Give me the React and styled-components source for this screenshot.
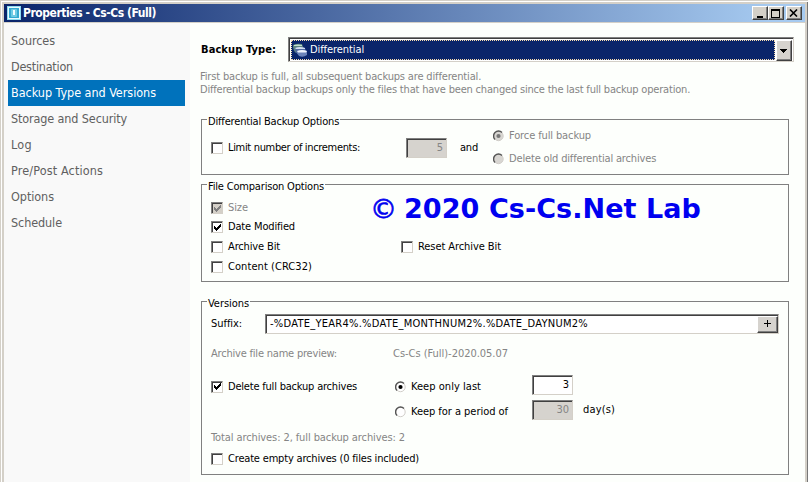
import React, { useLayoutEffect, useRef, useState } from "react";
import styled, { createGlobalStyle, css } from "styled-components";

const GlobalStyle = createGlobalStyle`
  * { box-sizing: border-box; }
  body {
    margin: 0;
    overflow: hidden;
    background: #d4d0c8;
    font-family: Tahoma, "DejaVu Sans Condensed", "DejaVu Sans", sans-serif;
    font-stretch: condensed;
    font-size: 11px;
    line-height: 14px;
    color: #000;
  }
`;

const Label = styled.span`
  display: inline-block;
  flex: none;
  justify-self: start;
  align-self: ${(p) => (p.$stacked ? "flex-start" : "auto")};
  white-space: pre;
  color: ${(p) => (p.$muted ? "#858585" : "inherit")};
  font-weight: ${(p) => (p.$bold ? 700 : 400)};
`;

/* Label tracked so that it fills the given width. */
function Text({ w, children, ...rest }) {
  const ref = useRef(null);
  const [spacing, setSpacing] = useState(0);
  useLayoutEffect(() => {
    ref.current.style.letterSpacing = "0px";
    const natural = ref.current.getBoundingClientRect().width;
    const next = (w - natural) / children.length;
    ref.current.style.letterSpacing = `${next}px`;
    setSpacing(next);
  }, [w, children]);
  return (
    <Label ref={ref} style={{ letterSpacing: `${spacing}px` }} {...rest}>
      {children}
    </Label>
  );
}

const Window = styled.div`
  width: 808px;
  height: 482px;
  display: flex;
  flex-direction: column;
  padding: 4px 3px 0 4px;
  background: #d4d0c8;
  box-shadow: inset 1px 1px #d4d0c8, inset 2px 2px #fff, inset -1px 0 #777;
`;

const TitleBar = styled.header`
  height: 18px;
  flex: none;
  display: flex;
  align-items: center;
  padding: 0 3px;
  color: #fff;
  font-size: 12px;
  background: linear-gradient(90deg, #0a246a, #a6caf0 96%);
`;

const TitleText = styled.div`
  flex: 1;
  padding-left: 2px;
`;

const WindowButton = styled.button`
  width: 16px;
  height: 14px;
  padding: 0;
  margin-left: ${(p) => (p.$apart ? "2px" : "0")};
  display: grid;
  place-items: center;
  border: 1px solid;
  border-color: #fff #404040 #404040 #fff;
  box-shadow: inset -1px -1px #808080;
  background: #d4d0c8;
`;

const Client = styled.div`
  flex: 1;
  display: flex;
  margin-top: 1px;
  background: #fdfffc;
`;

const Sidebar = styled.nav`
  width: 186px;
  padding: 5px 5px 0 4px;
  background: #f9f9f9;
`;

const NavItem = styled.div`
  height: 26px;
  padding-left: 3px;
  display: flex;
  align-items: center;
  font-size: 12.5px;
  color: ${(p) => (p.$active ? "#fff" : "#606060")};
  background: ${(p) => (p.$active ? "#0072bc" : "transparent")};
`;

const Main = styled.main`
  flex: 1;
  padding: 14px 0 0 11px;
`;

const TypeRow = styled.div`
  display: flex;
  align-items: center;
  height: 25px;
`;

const sunken = css`
  border: 1px solid;
  border-color: #808080 #d4d0c8 #d4d0c8 #808080;
  box-shadow: inset 1px 1px #404040;
`;

const Combo = styled.div`
  ${sunken}
  width: 506px;
  height: 25px;
  margin-left: 12px;
  padding: 2px 1px 1px 2px;
  display: flex;
  background: #fff;
`;

const ComboValue = styled.div`
  flex: 1;
  margin-right: 1px;
  display: flex;
  align-items: center;
  gap: 2px;
  padding-left: 1px;
  color: #fff;
  background: #0a246a;
  border: 1px dotted #f5dbb0;
`;

const RaisedButton = styled.button`
  width: ${(p) => p.$w}px;
  height: ${(p) => p.$h}px;
  padding: 0;
  display: grid;
  place-items: center;
  border: 1px solid;
  border-color: #fff #404040 #404040 #fff;
  box-shadow: inset -1px -1px #808080;
  background: #d6d3ce;
`;

const Hint = styled.div`
  display: flex;
  flex-direction: column;
  line-height: 13px;
  margin: 8px 0 0 -1px;
`;

const Group = styled.section`
  position: relative;
  width: 588px;
  height: ${(p) => p.$h}px;
  margin-top: ${(p) => p.$mt}px;
  border: 1px solid #808080;
`;

const Legend = styled.div`
  width: max-content;
  height: 14px;
  margin: -5px 0 0 5px;
  padding: 0 1px;
  background: #fdfffc;
`;

const Row = styled.div`
  display: grid;
  grid-template-columns: ${(p) => p.$cols};
  grid-template-rows: 100%;
  align-items: center;
  height: ${(p) => p.$h}px;
  padding-left: 9px;
`;

const Option = styled.label`
  display: flex;
  align-items: center;
  gap: 5px;
  padding-top: ${(p) => (p.$low ? 3 : 0)}px;
`;

const RadioStack = styled.div`
  display: grid;
  grid-template-rows: 23px 23px;
  align-items: center;
`;

const Box = styled.span`
  ${sunken}
  width: 12px;
  height: 12px;
  flex: none;
  display: grid;
  place-items: center;
  background: ${(p) => (p.$disabled ? "#d4d0c8" : "#fff")};
`;

const NumberField = styled.div`
  ${sunken}
  width: 41px;
  height: 20px;
  padding: 2px 3px 0 0;
  text-align: right;
  background: ${(p) => (p.$disabled ? "#d6d3ce" : "#fff")};
  color: ${(p) => (p.$disabled ? "#858585" : "#000")};
`;

const TextField = styled.div`
  ${sunken}
  width: 514px;
  height: 20px;
  padding-left: 4px;
  display: flex;
  align-items: center;
  justify-content: space-between;
  background: #fff;
`;

const Watermark = styled.div`
  position: absolute;
  left: 168px;
  top: 8px;
  display: flex;
  gap: 7px;
  color: #0000f0;
  font-family: Verdana, "DejaVu Sans", sans-serif;
  font-stretch: normal;
  font-size: 27px;
  line-height: 32px;
`;

const CopyrightSign = styled.span`
  width: 27px;
  -webkit-text-stroke: 0.6px #0000f0;
`;

function Check({ w, children, checked, disabled, low }) {
  return (
    <Option $low={low}>
      <Box $disabled={disabled}>
        {checked && (
          <svg width="9" height="9" viewBox="0 0 9 9" shapeRendering="crispEdges">
            <path
              d="M1 3h1v1h1v1h1v-1h1v-1h1v-1h1v-1h1v3h-1v1h-1v1h-1v1h-1v1h-1v-1h-1v-1h-1z"
              fill={disabled ? "#808080" : "#000"}
            />
          </svg>
        )}
      </Box>
      <Text w={w} $muted={disabled}>{children}</Text>
    </Option>
  );
}

function Radio({ w, children, checked, disabled, low }) {
  return (
    <Option $low={low}>
      <svg width="11" height="12" viewBox="0 0 11 12">
        <circle cx="5.5" cy="6" r="4.7" fill={disabled ? "#d8d6d2" : "#fff"} stroke="#d0cdc8" />
        <path d="M2 9.5A4.9 4.9 0 0 1 9 2.5" fill="none" stroke="#555" strokeWidth="1.4" />
        {checked && <circle cx="5.5" cy="6" r="2.1" fill={disabled ? "#777" : "#000"} />}
      </svg>
      <Text w={w} $muted={disabled}>{children}</Text>
    </Option>
  );
}

const AppIcon = () => (
  <svg width="14" height="14" viewBox="0 0 14 14">
    <rect width="14" height="14" fill="#8edcf0" />
    <rect x="1" y="1" width="12" height="12" fill="#e8fbff" />
    <rect x="2" y="2" width="10" height="10" fill="#35a9d0" />
    <rect x="4" y="3" width="6" height="8" rx="1" fill="#6fcbe3" />
    <rect x="6" y="4" width="2" height="5" fill="#f2fdff" />
  </svg>
);

const StackIcon = () => (
  <svg width="15" height="15" viewBox="0 0 15 15">
    <path d="M0 2q4-2 9-1l1 3-7 6Q0 8 0 2z" fill="#5d8580" />
    <path d="M1 2q4-1 8 0v1H1z" fill="#c3dfd0" />
    <path d="M2 5q5-2 10 0l1 4-7 3q-4-2-4-7z" fill="#536ba3" />
    <path d="M2 5q5-2 10 0v1H3z" fill="#d4e0f2" />
    <path d="M4 8q5-2 10 0v4q-4 3-8 1-2-2-2-5z" fill="#6c83ba" />
    <path d="M4 8q5-2 10 0l-1 1.5H5z" fill="#eef2fc" />
  </svg>
);

const NAV = [
  ["Sources", 44],
  ["Destination", 62],
  ["Backup Type and Versions", 145],
  ["Storage and Security", 116],
  ["Log", 21],
  ["Pre/Post Actions", 92],
  ["Options", 43],
  ["Schedule", 51],
];

export default function App() {
  return (
    <Window>
      <GlobalStyle />
      <TitleBar>
        <AppIcon />
        <TitleText>
          <Text w={133} $bold>Properties - Cs-Cs (Full)</Text>
        </TitleText>
        <WindowButton>
          <svg width="10" height="9" shapeRendering="crispEdges"><path d="M2 7h6v2h-6z" /></svg>
        </WindowButton>
        <WindowButton>
          <svg width="10" height="9" shapeRendering="crispEdges">
            <path d="M0 0h9v9h-9zM1 2v6h7v-6z" fillRule="evenodd" />
          </svg>
        </WindowButton>
        <WindowButton $apart>
          <svg width="10" height="8"><path d="M1 0.5L8 7.5M8 0.5L1 7.5" stroke="#000" strokeWidth="1.6" /></svg>
        </WindowButton>
      </TitleBar>
      <Client>
        <Sidebar>
          {NAV.map(([name, w]) => (
            <NavItem key={name} $active={w === 145}>
              <Text w={w}>{name}</Text>
            </NavItem>
          ))}
        </Sidebar>
        <Main>
          <TypeRow>
            <Text w={75} $bold>Backup Type:</Text>
            <Combo>
              <ComboValue>
                <StackIcon />
                <Text w={54}>Differential</Text>
              </ComboValue>
              <RaisedButton $w={16} $h={21}>
                <svg width="8" height="4" shapeRendering="crispEdges"><path d="M0 0h7v1h-7zM1 1h5v1h-5zM2 2h3v1h-3zM3 3h1v1h-1z" /></svg>
              </RaisedButton>
            </Combo>
          </TypeRow>
          <Hint>
            <Text w={281} $muted $stacked>First backup is full, all subsequent backups are differential.</Text>
            <Text w={490} $muted $stacked>Differential backup backups only the files that have been changed since the last full backup operation.</Text>
          </Hint>

          <Group $h={56} $mt={23}>
            <Legend><Text w={131}>Differential Backup Options</Text></Legend>
            <Row $h={37} $cols="195px 54px 33px auto">
              <Check w={132}>Limit number of increments:</Check>
              <NumberField $disabled>5</NumberField>
              <Text w={18}>and</Text>
              <RadioStack>
                <Radio w={82} checked disabled>Force full backup</Radio>
                <Radio w={147} disabled>Delete old differential archives</Radio>
              </RadioStack>
            </Row>
          </Group>

          <Group $h={98} $mt={9}>
            <Legend><Text w={116}>File Comparison Options</Text></Legend>
            <Row $h={28} $cols="auto"><Check w={20} checked disabled>Size</Check></Row>
            <Row $h={10} $cols="auto"><Check w={67} checked>Date Modified</Check></Row>
            <Row $h={30} $cols="190px auto">
              <Check w={52}>Archive Bit</Check>
              <Check w={83}>Reset Archive Bit</Check>
            </Row>
            <Row $h={10} $cols="auto"><Check w={84}>Content (CRC32)</Check></Row>
            <Watermark>
              <CopyrightSign>©</CopyrightSign>
              <Text w={297} $bold>2020 Cs-Cs.Net Lab</Text>
            </Watermark>
          </Group>

          <Group $h={174} $mt={19}>
            <Legend><Text w={41}>Versions</Text></Legend>
            <Row $h={26} $cols="54px auto">
              <Text w={31}>Suffix:</Text>
              <TextField>
                <Text w={318}>-%DATE_YEAR4%.%DATE_MONTHNUM2%.%DATE_DAYNUM2%</Text>
                <RaisedButton $w={21} $h={17}>
                  <svg width="8" height="8" shapeRendering="crispEdges"><path d="M3 0h1v3h3v1h-3v3h-1v-3h-3v-1h3z" /></svg>
                </RaisedButton>
              </TextField>
            </Row>
            <Row $h={34} $cols="182px auto">
              <Text w={126} $muted>Archive file name preview:</Text>
              <Text w={115} $muted>Cs-Cs (Full)-2020.05.07</Text>
            </Row>
            <Row $h={28} $cols="184px 137px auto">
              <Check w={129} checked low>Delete full backup archives</Check>
              <Radio w={70} checked low>Keep only last</Radio>
              <NumberField>3</NumberField>
            </Row>
            <Row $h={22} $cols="184px 137px 51px auto">
              <span />
              <Radio w={97} low>Keep for a period of</Radio>
              <NumberField $disabled>30</NumberField>
              <Text w={32}>day(s)</Text>
            </Row>
            <Row $h={33} $cols="auto"><Text w={194} $muted>Total archives: 2, full backup archives: 2</Text></Row>
            <Row $h={10} $cols="auto"><Check w={191}>Create empty archives (0 files included)</Check></Row>
          </Group>
        </Main>
      </Client>
    </Window>
  );
}
